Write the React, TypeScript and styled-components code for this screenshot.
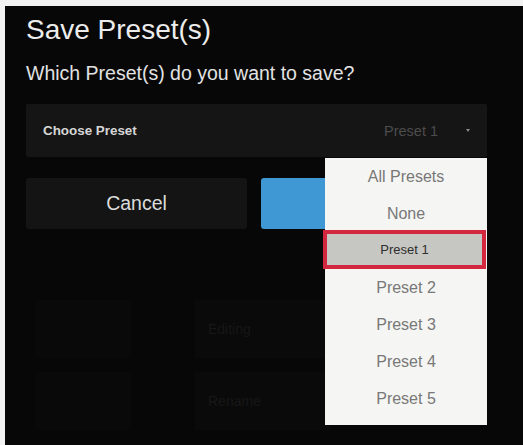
import React from "react";
import styled, { createGlobalStyle } from "styled-components";

const Global = createGlobalStyle`
  html, body { margin: 0; padding: 0; background: #f4f4f4; }
  body { font-family: "Liberation Sans", Arial, sans-serif; }
`;

const Page = styled.div`
  width: 523px;
  height: 445px;
  box-sizing: border-box;
  padding: 6px 0 0 5px;
  background: #f2f2f2;
  overflow: hidden;
`;

const Frame = styled.div`
  position: relative;
  width: 518px;
  height: 439px;
  background: #070707;
  box-sizing: border-box;
  padding: 8px 36px 0 21px;
  display: flex;
  flex-direction: column;
`;

const Title = styled.h1`
  margin: 0;
  font-size: 28px;
  line-height: 32px;
  font-weight: normal;
  color: #ececec;
`;

const Subtitle = styled.p`
  margin: 15px 0 0;
  font-size: 19.5px;
  line-height: 24px;
  color: #e2e2e2;
`;

const SelectBox = styled.div`
  margin-top: 19px;
  height: 53px;
  background: #151515;
  display: flex;
  align-items: center;
  padding: 0 17px 0 17px;
  border-radius: 2px;
`;

const SelectLabel = styled.span`
  flex: 1;
  font-size: 13.4px;
  font-weight: bold;
  color: #d6d6d6;
`;

const SelectValue = styled.span`
  font-size: 14.5px;
  color: #4c4c4c;
  margin-right: 28px;
`;

const Caret = styled.span`
  width: 0;
  height: 0;
  border-left: 2.5px solid transparent;
  border-right: 2.5px solid transparent;
  border-top: 3px solid #8a8a8a;
`;

const ButtonRow = styled.div`
  margin-top: 21px;
  display: grid;
  grid-template-columns: 221px 1fr;
  gap: 14px;
`;

const Button = styled.div<{ $primary?: boolean }>`
  height: 51px;
  border-radius: 3px;
  display: flex;
  align-items: center;
  justify-content: center;
  font-size: 19.5px;
  color: #dcdcdc;
  background: ${(p) => (p.$primary ? "#3f98d4" : "#141414")};
`;

const Backdrop = styled.div`
  margin-top: 71px;
  margin-left: 9px;
  display: grid;
  grid-template-columns: 96px 135px;
  column-gap: 64px;
  row-gap: 14px;
`;

const GhostCell = styled.div<{ $tone: string }>`
  height: 58px;
  background: ${(p) => p.$tone};
  display: flex;
  align-items: center;
  padding-left: 13px;
  font-size: 14px;
  color: #171717;
`;

const Menu = styled.div`
  position: absolute;
  left: 320px;
  top: 152px;
  width: 162px;
  height: 267px;
  box-sizing: border-box;
  background: #f5f5f3;
  display: flex;
  flex-direction: column;
`;

const MenuItem = styled.div<{ $selected?: boolean }>`
  height: ${(p) => (p.$selected ? "39px" : "37px")};
  box-sizing: border-box;
  display: flex;
  align-items: center;
  justify-content: center;
  font-size: ${(p) => (p.$selected ? "13px" : "16px")};
  color: ${(p) => (p.$selected ? "#2e2e2e" : "#787878")};
  background: ${(p) => (p.$selected ? "#c6c7c2" : "transparent")};
  border: ${(p) => (p.$selected ? "4px solid #d3263f" : "none")};
  margin: ${(p) => (p.$selected ? "-2px 1px 0 -2px" : "0")};
`;

const items = ["All Presets", "None", "Preset 1", "Preset 2", "Preset 3", "Preset 4", "Preset 5"];

export default function App() {
  return (
    <>
      <Global />
      <Page>
        <Frame>
          <Title>Save Preset(s)</Title>
          <Subtitle>Which Preset(s) do you want to save?</Subtitle>
          <SelectBox>
            <SelectLabel>Choose Preset</SelectLabel>
            <SelectValue>Preset 1</SelectValue>
            <Caret />
          </SelectBox>
          <ButtonRow>
            <Button>Cancel</Button>
            <Button $primary />
          </ButtonRow>
          <Backdrop>
            <GhostCell $tone="#090909" />
            <GhostCell $tone="#0a0a0a">Editing</GhostCell>
            <GhostCell $tone="#090909" />
            <GhostCell $tone="#0a0a0a">Rename</GhostCell>
          </Backdrop>
          <Menu>
            {items.map((it) => (
              <MenuItem key={it} $selected={it === "Preset 1"}>
                {it}
              </MenuItem>
            ))}
          </Menu>
        </Frame>
      </Page>
    </>
  );
}
